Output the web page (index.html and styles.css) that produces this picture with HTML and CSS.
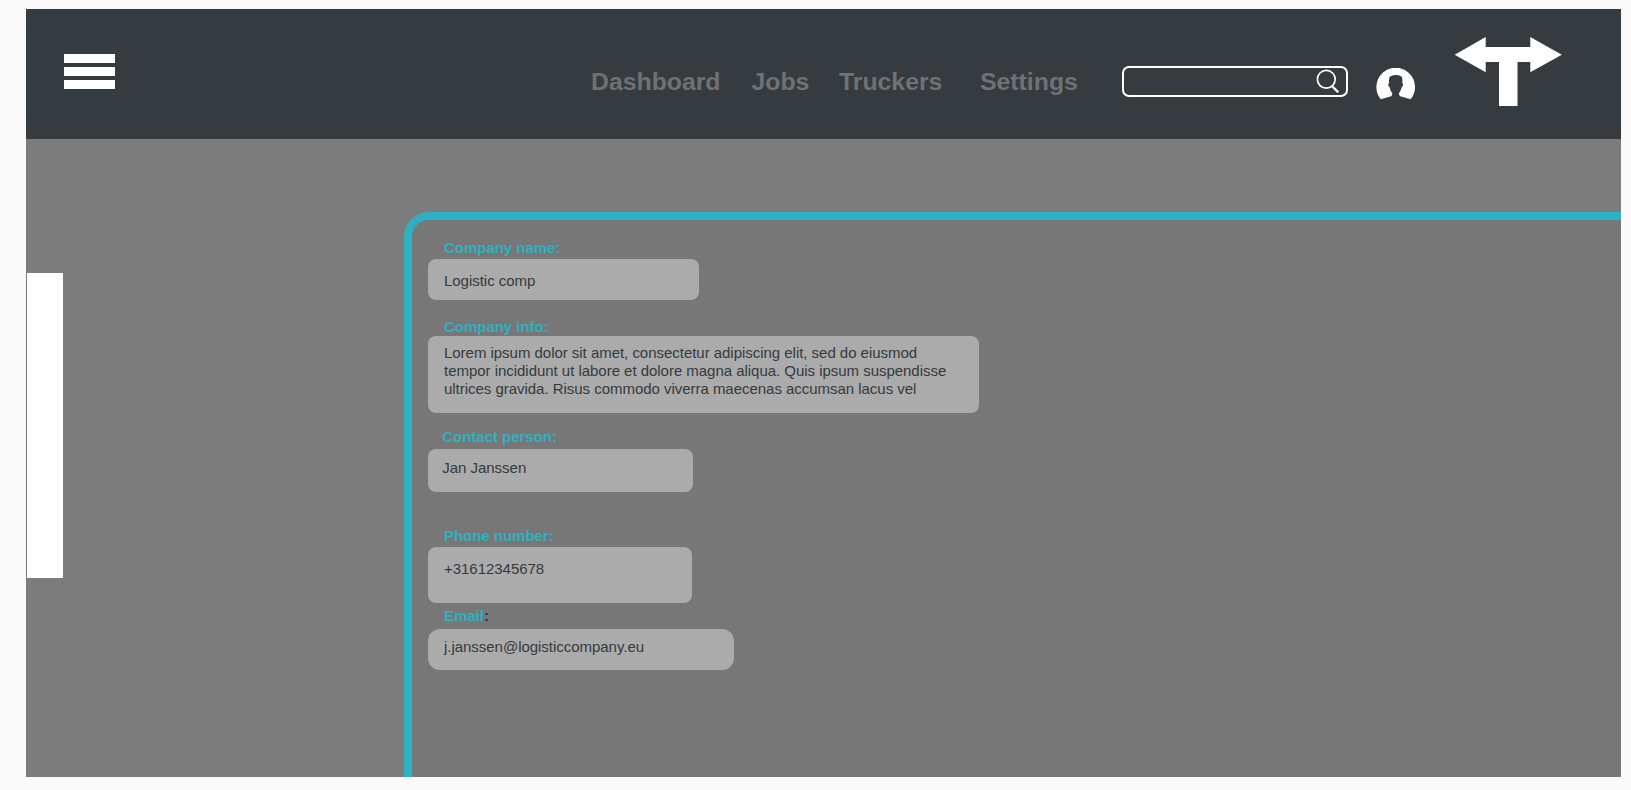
FILE: index.html
```html
<!DOCTYPE html>
<html lang="en">
<head>
<meta charset="utf-8">
<title>Company profile</title>
<link rel="stylesheet" href="styles.css">
</head>
<body>
<div class="app">
  <header class="header">
    <button class="menu" aria-label="Menu"><span></span><span></span><span></span></button>
    <nav class="nav">
      <a class="dashboard">Dashboard</a>
      <a class="jobs">Jobs</a>
      <a class="truckers">Truckers</a>
      <a class="settings">Settings</a>
    </nav>
    <div class="search">
      <svg width="24" height="24" viewBox="0 0 24 24" fill="none" stroke="#fff"><circle cx="10.3" cy="10.3" r="8.9" stroke-width="1.7"/><path d="M16.2 17.2 21.6 22.6" stroke-width="2.2" stroke-linecap="round"/></svg>
    </div>
    <svg class="avatar" width="40" height="32" viewBox="0 0 40 32"><path fill="#fff" d="M4.8 31.3A19.3 19.3 0 1 1 34.6 31.3L24.3 28.2Q22.8 27.4 23 25.2Q25.2 22.6 25.6 19.2Q27.3 18.2 27 15.7Q26.8 15.2 26.1 15.3Q27 10.6 25.5 8.6Q23.8 6.9 19.6 7Q15.4 7 13.8 8.8Q12.6 10.8 13.2 15.3Q12.4 15.2 12.2 15.9Q12.3 18.2 13.6 19.2Q14.3 22.7 16.2 25.2Q16.5 27.3 15.1 28.2Z"/></svg>
    <svg class="logo" width="108" height="70" viewBox="0 0 108 70"><path fill="#fff" d="M.7 17.7 31.7 0V10H76.3V0L107.8 17.7 76.3 35.3V25H63.5V69H45V25H31.7V35.3Z"/></svg>
  </header>
  <main class="body">
    <aside class="drawer"></aside>
    <section class="panel">
      <div class="field name"><label>Company name:</label><div class="value">Logistic comp</div></div>
      <div class="field info"><label>Company info:</label><div class="value">Lorem ipsum dolor sit amet, consectetur adipiscing elit, sed do eiusmod<br>tempor incididunt ut labore et dolore magna aliqua. Quis ipsum suspendisse<br>ultrices gravida. Risus commodo viverra maecenas accumsan lacus vel</div></div>
      <div class="field contact"><label>Contact person:</label><div class="value">Jan Janssen</div></div>
      <div class="field phone"><label>Phone number:</label><div class="value">+31612345678</div></div>
      <div class="field email"><label>Email<span class="colon">:</span></label><div class="value">j.janssen@logisticcompany.eu</div></div>
    </section>
  </main>
</div>
</body>
</html>
```
FILE: styles.css
```css
* { box-sizing: border-box; }
body {
  margin: 0;
  height: 790px;
  overflow: hidden;
  padding: 9px 10px 13px 26px;
  background: #fafafa;
  font-family: "Liberation Sans", Arial, sans-serif;
}
.app {
  display: flex;
  flex-direction: column;
  height: 768px;
  background: #7c7c7c;
}
.header {
  display: flex;
  align-items: flex-start;
  height: 130px;
  background: #363b3f;
}
.menu {
  display: flex;
  flex-direction: column;
  gap: 4.5px;
  width: 51px;
  margin: 45px 0 0 38px;
  padding: 0;
  border: 0;
  background: none;
}
.menu span { height: 8.6px; background: #fff; }
.nav {
  display: flex;
  width: 490px;
  margin: 58px 0 0 476px;
  font-size: 24.8px;
  font-weight: 700;
  line-height: 29px;
  color: #6f7174;
  white-space: nowrap;
}
.dashboard { width: 160.5px; }
.jobs { width: 87.5px; }
.truckers { width: 141px; }
.search {
  display: flex;
  justify-content: flex-end;
  width: 226px;
  height: 31px;
  margin: 57px 0 0 41px;
  padding: 1px 6px 0 0;
  border: 2px solid #fff;
  border-radius: 7px;
}
.avatar { margin: 59px 0 0 28px; }
.logo { margin: 28px 0 0 38px; }
.body {
  display: flex;
  align-items: flex-start;
  height: 638px;
}
.drawer {
  width: 36px;
  height: 305px;
  margin: 134px 0 0 1px;
  background: #fff;
}
.panel {
  flex: 1;
  height: 565px;
  margin: 73px 0 0 341px;
  padding: 19px 0 0 16px;
  border-top: 8px solid #2fb0c5;
  border-left: 8px solid #2fb0c5;
  border-top-left-radius: 25px;
  background: #777;
  color: #343a40;
  font-size: 15px;
  letter-spacing: -0.03px;
}
.field label {
  display: block;
  padding-left: 16px;
  line-height: 17px;
  font-weight: 700;
  color: #2fb0c0;
}
.colon { color: #2c3038; }
.value {
  padding-left: 16px;
  border-radius: 8px;
  background: #ababab;
  line-height: 18px;
  white-space: nowrap;
}
.name { margin-bottom: 18px; }
.name .value { width: 271px; height: 41px; margin-top: 3px; padding-top: 13px; }
.info { margin-bottom: 15px; }
.info .value { width: 551px; height: 77px; margin-top: 1px; padding-top: 8px; }
.contact { margin-bottom: 35px; }
.contact label, .contact .value { padding-left: 14.3px; }
.contact .value { width: 265px; height: 43px; margin-top: 4px; padding-top: 10px; }
.phone { margin-bottom: 4px; }
.phone .value { width: 264px; height: 56px; margin-top: 3px; padding-top: 13px; }
.email .value { width: 306px; height: 41px; margin-top: 5px; padding-top: 9px; border-radius: 12px; }
```
